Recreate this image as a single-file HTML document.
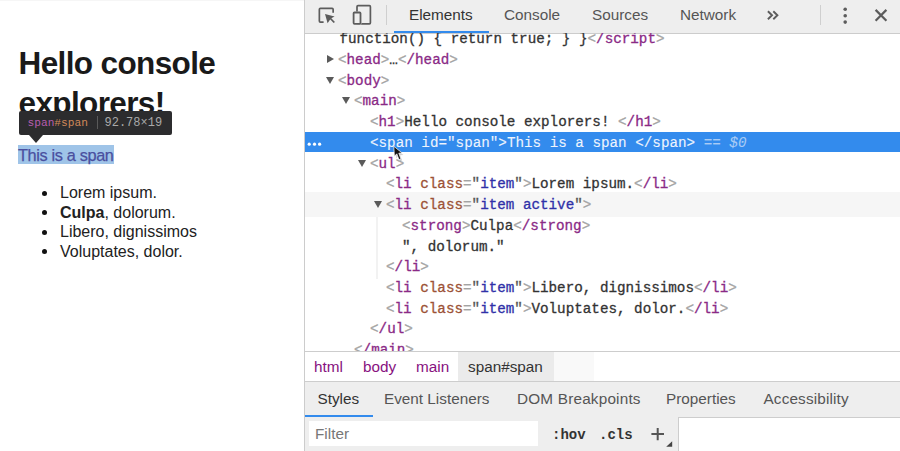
<!DOCTYPE html>
<html><head><meta charset="utf-8">
<style>
html,body{margin:0;padding:0;}
body{width:900px;height:451px;overflow:hidden;position:relative;background:#fff;font-family:"Liberation Sans",sans-serif;}
.abs{position:absolute;}
/* page */
#page{position:absolute;left:0;top:0;width:304px;height:451px;background:#fff;}
h1{position:absolute;margin:0;left:18.5px;top:44.2px;font-size:31.5px;line-height:39.6px;font-weight:bold;color:#1a1a1a;white-space:nowrap;letter-spacing:-0.62px;}
#hl{position:absolute;left:18px;top:145px;width:96px;height:19px;background:#9fc4e8;}
#spantxt{position:absolute;left:18px;top:144px;font-size:16.3px;line-height:22px;color:#4a4f9f;white-space:nowrap;letter-spacing:-0.35px;-webkit-text-stroke:0.25px currentColor;}
#tip{position:absolute;left:19px;top:111px;width:153px;height:24px;background:#2c2c2e;border-radius:2px;}
#tiparrow{position:absolute;left:28.5px;top:134.9px;width:0;height:0;border-left:7.7px solid transparent;border-right:7.7px solid transparent;border-top:8px solid #2c2c2e;}
#tiptxt{position:absolute;left:27.5px;top:111px;height:24px;line-height:24px;font-family:"Liberation Mono",monospace;font-size:11.2px;white-space:nowrap;font-weight:normal;}
#tipnum{position:absolute;left:104.5px;top:111px;height:24px;line-height:25px;font-family:"Liberation Mono",monospace;font-size:12px;white-space:nowrap;color:#a9a9a9;}
#tipsep{position:absolute;left:97px;top:116px;width:1px;height:13px;background:#5a5a5a;}
ul.list{position:absolute;left:0;top:183px;margin:0;padding:0;list-style:none;font-size:16px;line-height:19.6px;color:#222;}
ul.list li{position:relative;padding-left:60px;white-space:nowrap;}
ul.list li:before{content:"";position:absolute;left:41.5px;top:7.5px;width:5px;height:5px;border-radius:50%;background:#111;}
/* devtools */
#dt{position:absolute;left:304px;top:0;width:596px;height:451px;background:#fff;border-left:1px solid #ccc;box-sizing:border-box;}
#tb{position:absolute;left:305px;top:0;width:595px;height:33px;background:#eeeeee;border-bottom:1px solid #ccc;}
.tab{position:absolute;top:0;height:32px;line-height:30px;font-size:15.3px;color:#333;white-space:nowrap;}
#tree{position:absolute;left:305px;top:33px;width:595px;height:319px;overflow:hidden;font-family:"Liberation Mono",monospace;font-size:14.25px;}
.row{position:absolute;left:0;width:595px;height:20.72px;line-height:20.72px;white-space:pre;color:#303942;}
.code{position:absolute;top:0;-webkit-text-stroke:0.3px currentColor;}
.tx{color:#333;}
.tg{color:#a3a3a3;} .tn{color:#8a2a86;} .an{color:#9c5236;} .av{color:#2f30a8;} .eq{color:#a3a3a3;} .q{color:#555;}
.selbg{position:absolute;left:0;width:595px;height:20px;background:#338bed;}
.sel .tg,.sel .tn,.sel .an,.sel .av,.sel .eq,.sel .tx,.sel .q{color:#eef4fd;}
.d0{color:#a9cbf5;}
.sel .code{-webkit-text-stroke:0.1px currentColor;}
.hovbg{position:absolute;left:0;width:595px;height:25.5px;background:#f6f6f6;}
.guide{position:absolute;left:71px;width:2px;height:62px;background:#f2f2f2;}
.tri{position:absolute;width:0;height:0;}
.tri.down{border-left:4.5px solid transparent;border-right:4.5px solid transparent;border-top:7px solid #5a5a5a;}
.tri.right{border-top:4.5px solid transparent;border-bottom:4.5px solid transparent;border-left:7px solid #5a5a5a;}
#crumbs{position:absolute;left:305px;top:351px;width:595px;height:30px;background:#fff;border-top:1px solid #cdcdcd;font-size:15.3px;}
.crumb{position:absolute;top:0;height:30px;line-height:29px;color:#881280;white-space:nowrap;}
#tabs2{position:absolute;left:305px;top:381px;width:595px;height:35px;background:#eeeeee;border-top:1px solid #cdcdcd;border-bottom:1px solid #cdcdcd;font-size:15.3px;}
.tab2{position:absolute;top:0;height:35px;line-height:34px;color:#333;white-space:nowrap;}
#filterbar{position:absolute;left:305px;top:417px;width:373px;height:34px;background:#eeeeee;border-right:1px solid #cdcdcd;}
#filterin{position:absolute;left:4px;top:4px;width:229px;height:25px;background:#fff;}
#filtertxt{position:absolute;left:10px;top:4px;height:25px;line-height:25px;font-size:15.3px;color:#777;}
.fb{position:absolute;top:6px;height:25px;line-height:25px;font-family:"Liberation Mono",monospace;font-weight:bold;font-size:14px;color:#333;white-space:nowrap;}
</style></head><body>
<div id="page"><div class="abs" style="left:0;top:0;width:304px;height:1px;background:#f6f6f6"></div>
  <h1>Hello console<br>explorers!</h1>
  <div id="hl"></div>
  <div id="spantxt">This is a span</div>
  <div id="tip"></div><div id="tiparrow"></div>
  <div id="tiptxt"><span style="color:#b65cae">span</span><span style="color:#cf8859">#span</span></div><div id="tipsep"></div><div id="tipnum">92.78×19</div>
  <ul class="list">
    <li>Lorem ipsum.</li>
    <li><b>Culpa</b>, dolorum.</li>
    <li>Libero, dignissimos</li>
    <li>Voluptates, dolor.</li>
  </ul>
</div>
<div id="dt"></div>
<div id="tb">
  <svg class="abs" style="left:0;top:0" width="595" height="33" viewBox="305 0 595 33">
    <g fill="none" stroke="#5c5c5c" stroke-width="1.7">
      <path d="M323.6 22.05 H320.4 Q319.35 22.05 319.35 21 V9.4 Q319.35 8.35 320.4 8.35 H332.1 Q333.15 8.35 333.15 9.4 V12.8"/>
      <rect x="357.0" y="5.7" width="13.4" height="18.1" rx="1"/>
    </g>
    <rect x="352.7" y="11.6" width="8.7" height="13.1" rx="1" fill="#eeeeee"/>
    <g fill="none" stroke="#5c5c5c">
      <rect x="353.6" y="12.5" width="6.9" height="11.3" rx="0.8" stroke-width="1.8"/>
    </g>
    <path d="M325.0 14.0 L334.6 16.6 L330.8 18.6 L327.6 23.3 Z" fill="#5c5c5c"/>
    <path d="M329.5 17.5 L334.3 22.5" stroke="#5c5c5c" stroke-width="1.8"/>
    <rect x="386" y="5" width="1" height="20" fill="#cfcfcf"/>
    <path d="M767.9 11.2 L772.0 15.2 L767.9 19.2 M773.3 11.2 L777.4 15.2 L773.3 19.2" fill="none" stroke="#5c5c5c" stroke-width="1.9"/>
    <rect x="820" y="5" width="1" height="20" fill="#cfcfcf"/>
    <circle cx="845.2" cy="9.3" r="1.8" fill="#5c5c5c"/>
    <circle cx="845.2" cy="15.8" r="1.8" fill="#5c5c5c"/>
    <circle cx="845.2" cy="22.1" r="1.8" fill="#5c5c5c"/>
    <path d="M875.6 9.9 L886.4 20.7 M886.4 9.9 L875.6 20.7" stroke="#5c5c5c" stroke-width="2.2"/>
  </svg>
  <div class="tab" style="left:104px">Elements</div>
  <div class="tab" style="left:199px;color:#555">Console</div>
  <div class="tab" style="left:287px;color:#555">Sources</div>
  <div class="tab" style="left:375px;color:#555">Network</div>
  <div class="abs" style="left:89px;top:31px;width:95px;height:2px;background:#338bed"></div>
</div>
<div id="tree">
  <div class="selbg" style="top:99.00px"></div>
  <div class="hovbg" style="top:158.60px"></div>
  <div class="guide" style="top:183.60px"></div>
  <svg class="abs" style="left:0;top:100.00px" width="20" height="20"><circle cx="4.2" cy="11.2" r="1.6" fill="#fff"/><circle cx="9.5" cy="11.2" r="1.6" fill="#fff"/><circle cx="14.6" cy="11.2" r="1.6" fill="#fff"/></svg>
  <div class="row" style="top:-3.70px"><div class="code" style="left:34.50px"><span class="tx">function() { return true; } }</span><span class="tg">&lt;</span><span class="tn">/</span><span class="tn">script</span><span class="tg">&gt;</span></div></div>
  <div class="row" style="top:17.02px"><div class="tri right" style="left:22.00px;top:5px"></div><div class="code" style="left:33.00px"><span class="tg">&lt;</span><span class="tn">head</span><span class="tg">&gt;</span><span class="tx">…</span><span class="tg">&lt;</span><span class="tn">/</span><span class="tn">head</span><span class="tg">&gt;</span></div></div>
  <div class="row" style="top:37.74px"><div class="tri down" style="left:20.50px;top:6px"></div><div class="code" style="left:33.00px"><span class="tg">&lt;</span><span class="tn">body</span><span class="tg">&gt;</span></div></div>
  <div class="row" style="top:58.46px"><div class="tri down" style="left:36.50px;top:6px"></div><div class="code" style="left:49.00px"><span class="tg">&lt;</span><span class="tn">main</span><span class="tg">&gt;</span></div></div>
  <div class="row" style="top:79.18px"><div class="code" style="left:65.00px"><span class="tg">&lt;</span><span class="tn">h1</span><span class="tg">&gt;</span><span class="tx">Hello console explorers! </span><span class="tg">&lt;</span><span class="tn">/</span><span class="tn">h1</span><span class="tg">&gt;</span></div></div>
  <div class="row sel" style="top:99.90px"><div class="code" style="left:65.00px"><span class="tg">&lt;</span><span class="tn">span</span> <span class="an">id</span><span class="eq">=</span><span class="q">"</span><span class="av">span</span><span class="q">"</span><span class="tg">&gt;</span><span class="tx">This is a span </span><span class="tg">&lt;</span><span class="tn">/</span><span class="tn">span</span><span class="tg">&gt;</span> <span class="d0">== <i>$0</i></span></div></div>
  <div class="row" style="top:120.62px"><div class="tri down" style="left:52.50px;top:6px"></div><div class="code" style="left:65.00px"><span class="tg">&lt;</span><span class="tn">ul</span><span class="tg">&gt;</span></div></div>
  <div class="row" style="top:141.34px"><div class="code" style="left:81.00px"><span class="tg">&lt;</span><span class="tn">li</span> <span class="an">class</span><span class="eq">=</span><span class="q">"</span><span class="av">item</span><span class="q">"</span><span class="tg">&gt;</span><span class="tx">Lorem ipsum.</span><span class="tg">&lt;</span><span class="tn">/</span><span class="tn">li</span><span class="tg">&gt;</span></div></div>
  <div class="row" style="top:162.06px"><div class="tri down" style="left:68.50px;top:6px"></div><div class="code" style="left:81.00px"><span class="tg">&lt;</span><span class="tn">li</span> <span class="an">class</span><span class="eq">=</span><span class="q">"</span><span class="av">item active</span><span class="q">"</span><span class="tg">&gt;</span></div></div>
  <div class="row" style="top:182.78px"><div class="code" style="left:97.00px"><span class="tg">&lt;</span><span class="tn">strong</span><span class="tg">&gt;</span><span class="tx">Culpa</span><span class="tg">&lt;</span><span class="tn">/</span><span class="tn">strong</span><span class="tg">&gt;</span></div></div>
  <div class="row" style="top:203.50px"><div class="code" style="left:97.00px"><span class="tx">", dolorum."</span></div></div>
  <div class="row" style="top:224.22px"><div class="code" style="left:81.00px"><span class="tg">&lt;</span><span class="tn">/</span><span class="tn">li</span><span class="tg">&gt;</span></div></div>
  <div class="row" style="top:244.94px"><div class="code" style="left:81.00px"><span class="tg">&lt;</span><span class="tn">li</span> <span class="an">class</span><span class="eq">=</span><span class="q">"</span><span class="av">item</span><span class="q">"</span><span class="tg">&gt;</span><span class="tx">Libero, dignissimos</span><span class="tg">&lt;</span><span class="tn">/</span><span class="tn">li</span><span class="tg">&gt;</span></div></div>
  <div class="row" style="top:265.66px"><div class="code" style="left:81.00px"><span class="tg">&lt;</span><span class="tn">li</span> <span class="an">class</span><span class="eq">=</span><span class="q">"</span><span class="av">item</span><span class="q">"</span><span class="tg">&gt;</span><span class="tx">Voluptates, dolor.</span><span class="tg">&lt;</span><span class="tn">/</span><span class="tn">li</span><span class="tg">&gt;</span></div></div>
  <div class="row" style="top:286.38px"><div class="code" style="left:65.00px"><span class="tg">&lt;</span><span class="tn">/</span><span class="tn">ul</span><span class="tg">&gt;</span></div></div>
  <div class="row" style="top:307.10px"><div class="code" style="left:49.00px"><span class="tg">&lt;</span><span class="tn">/</span><span class="tn">main</span><span class="tg">&gt;</span></div></div>
</div>
<div id="crumbs">
  <div class="abs" style="left:153px;top:0;width:96px;height:29px;background:#ebebeb"></div>
  <div class="abs" style="left:249px;top:0;width:40px;height:29px;background:#f9f9f9"></div>
  <div class="crumb" style="left:9px">html</div>
  <div class="crumb" style="left:58px">body</div>
  <div class="crumb" style="left:111px">main</div>
  <div class="crumb" style="left:163px;color:#333">span#span</div>
</div>
<div id="tabs2">
  <div class="tab2" style="left:12.5px">Styles</div>
  <div class="tab2" style="left:79px;color:#555">Event Listeners</div>
  <div class="tab2" style="left:212px;color:#555;letter-spacing:0.2px">DOM Breakpoints</div>
  <div class="tab2" style="left:361px;color:#555">Properties</div>
  <div class="tab2" style="left:458.5px;color:#555;letter-spacing:0.15px">Accessibility</div>
  <div class="abs" style="left:0;top:33px;width:67.5px;height:2px;background:#338bed"></div>
</div>
<div id="filterbar"><div id="filterin"></div><div id="filtertxt">Filter</div>
  <div class="fb" style="left:247px">:hov</div>
  <div class="fb" style="left:294px">.cls</div>
  <svg class="abs" style="left:0;top:0" width="373" height="34" viewBox="305 417 373 34">
    <path d="M657.7 427.9 V440.3 M651.4 434.0 H664.0" stroke="#555" stroke-width="2"/>
    <path d="M672.2 441.2 L672.2 446.8 L666.2 446.8 Z" fill="#444"/>
  </svg>
</div>
<svg class="abs" style="left:385px;top:140px" width="25" height="28" viewBox="385 140 25 28">
  <path d="M395.3 148.8 L396.3 158.5 L398.2 155.8 L400.2 161.2 L402.2 160.4 L400.2 155.3 L403.5 155.1 Z" fill="rgba(0,0,0,0.18)"/>
  <path d="M393.8 146.3 L394.4 156.3 L396.8 153.8 L398.9 159.6 L400.9 158.9 L398.8 153.2 L402.2 153.0 Z" fill="#111" stroke="#fff" stroke-width="0.7" stroke-linejoin="round"/>
</svg>
</body></html>
